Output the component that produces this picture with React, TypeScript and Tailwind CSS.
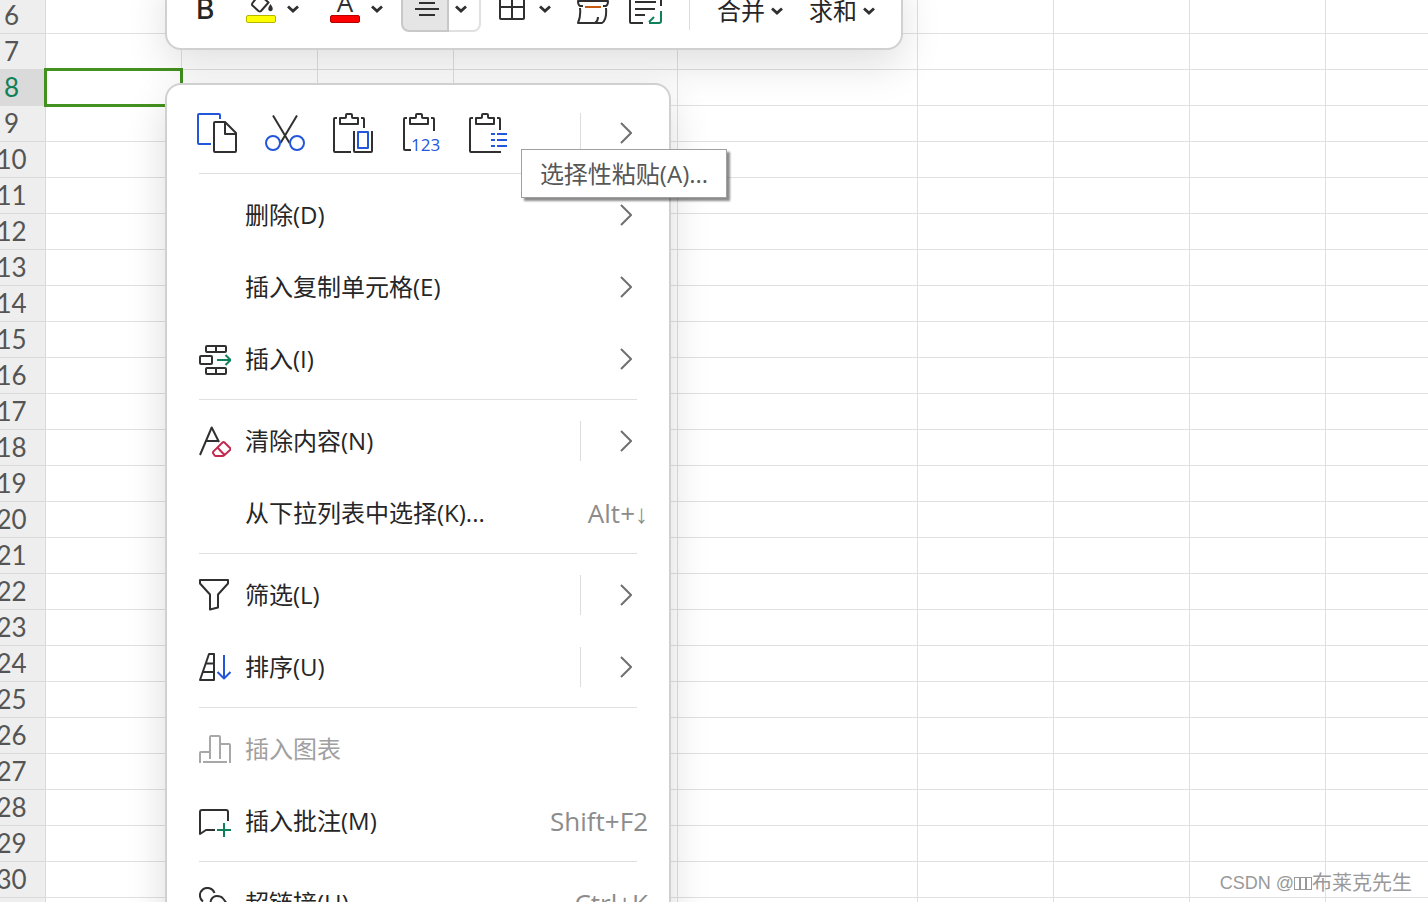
import type { ReactNode } from "react";
import clsx from "clsx";

const ROWS = Array.from({ length: 26 }, (_, i) => i + 6);
const COLUMNS = ["A", "B", "C", "D", "E", "F", "G", "H", "I"];
const ACTIVE_ROW = 8;

const INK = "#303030";
const BLUE = "#2456dc";
const GREEN = "#0f8058";

type MenuEntry = {
  label: string;
  icon?: ReactNode;
  shortcut?: string;
  submenu?: boolean;
  split?: boolean;
  disabled?: boolean;
};

function MenuIcon({ children, stroke = INK }: { children: ReactNode; stroke?: string }) {
  return (
    <svg
      className="size-8"
      viewBox="0 0 32 32"
      fill="none"
      stroke={stroke}
      strokeWidth="2"
      strokeLinejoin="round"
      aria-hidden="true"
    >
      {children}
    </svg>
  );
}

const insertIcon = (
  <MenuIcon>
    <rect x="7" y="3" width="20" height="6" rx="1" />
    <path d="M17 3v6M17 25v6" />
    <rect x="1" y="13" width="12" height="8" rx="1" />
    <rect x="7" y="25" width="20" height="6" rx="1" />
    <path d="M18 17h13M26.500 12l5 5-5 5" stroke={GREEN} />
  </MenuIcon>
);

const clearIcon = (
  <MenuIcon>
    <path d="M1 30L12.700 2.500L20 17M6 16h14" />
    <path
      d="M23.500 17.500q1-1 2 0l5.500 5.500q1 1 0 2L25 30.500q-.5.5-1.500.5H17q-1 0-1.500-.7l-1.200-1.800q-.7-1.200.2-2.100zM18.500 22.500l7 7.500"
      stroke="#c5284f"
    />
  </MenuIcon>
);

const filterIcon = (
  <MenuIcon>
    <path d="M1 1h28v3.500L19 15.500v13l-8 2V15.500L1 4.500z" />
  </MenuIcon>
);

const sortIcon = (
  <MenuIcon>
    <path d="M15 3h-5L1 29h14zM7 12.500h8M4 21h11" />
    <path d="M25 4v24M18.500 21l6.500 6.500 6.500-6.500" stroke={BLUE} />
  </MenuIcon>
);

const chartIcon = (
  <MenuIcon stroke="#a8a8a8">
    <path d="M1 30V20q0-1 1-1h9M11 26V4q0-1 1-1h8q1 0 1 1v22M21 11h9q1 0 1 1v18M4 29h24" />
  </MenuIcon>
);

const commentIcon = (
  <MenuIcon>
    <path d="M29 16V7q0-2-2-2H3Q1 5 1 7v22l6-4h9" />
    <path d="M25 18v14M18 25h14" stroke={GREEN} />
  </MenuIcon>
);

const linkIcon = (
  <MenuIcon>
    <path d="M4 14.500A7.500 7.500 0 1 1 15.500 6M12 13q2-4 6-4 4 0 6 2.500l5 6.500q2 5-2 8.500-5 3-9 0l-5-6q-2-4-1-7.500z" />
  </MenuIcon>
);

const MENU_GROUPS: MenuEntry[][] = [
  [
    { label: "删除(D)", submenu: true },
    { label: "插入复制单元格(E)", submenu: true },
    { label: "插入(I)", icon: insertIcon, submenu: true },
  ],
  [
    { label: "清除内容(N)", icon: clearIcon, submenu: true, split: true },
    { label: "从下拉列表中选择(K)...", shortcut: "Alt+↓" },
  ],
  [
    { label: "筛选(L)", icon: filterIcon, submenu: true, split: true },
    { label: "排序(U)", icon: sortIcon, submenu: true, split: true },
  ],
  [
    { label: "插入图表", icon: chartIcon, disabled: true },
    { label: "插入批注(M)", icon: commentIcon, shortcut: "Shift+F2" },
  ],
  [{ label: "超链接(H)", icon: linkIcon, shortcut: "Ctrl+K" }],
];

export default function App() {
  return (
    <main className="relative h-screen overflow-hidden bg-white font-['Open_Sans','Noto_Sans_CJK_SC',sans-serif] text-[#262626]">
      <Sheet />
      <FloatingToolbar />
      <ContextMenu />
      <Watermark />
    </main>
  );
}

function Sheet() {
  return (
    // first column is scrolled partly out of view
    <div className="-mt-[2px] -ml-[22px]">
      <table className="w-full table-fixed border-separate border-spacing-0">
        <colgroup>
          <col className="w-[68px]" />
          <col className="w-[136px]" />
          <col className="w-[136px]" />
          <col className="w-[136px]" />
          <col className="w-[224px]" />
          <col className="w-[240px]" />
          <col className="w-[136px]" />
          <col className="w-[136px]" />
          <col className="w-[136px]" />
          <col />
        </colgroup>
        <tbody>
          {ROWS.map((row) => (
            <tr key={row} className="h-9">
              <th
                scope="row"
                className={clsx(
                  "border-r border-b border-[#dadada] p-0 font-['Lato',sans-serif] text-[26px] leading-[35px] font-normal",
                  row === ACTIVE_ROW ? "bg-[#dadada] text-[#0f8058]" : "bg-[#eeeeee] text-[#555555]",
                )}
              >
                {row}
              </th>
              {COLUMNS.map((col) => (
                <td key={col} className="relative border-b border-[#e0e0e0] p-0 not-last:border-r">
                  {row === ACTIVE_ROW && col === "A" ? (
                    <span className="absolute -inset-[2px] z-10 border-3 border-[#43911f]" />
                  ) : null}
                </td>
              ))}
            </tr>
          ))}
        </tbody>
      </table>
    </div>
  );
}

function DownCaret() {
  return (
    <svg className="h-3 w-3" viewBox="0 0 12 12" fill="none" stroke={INK} strokeWidth="2.800" aria-hidden="true">
      <path d="M1 3.500l5 4.500 5-4.500" />
    </svg>
  );
}

function FloatingToolbar() {
  return (
    <div
      role="toolbar"
      aria-label="格式"
      className="absolute -top-[31px] left-[165px] z-20 flex h-[81px] items-center rounded-2xl border-2 border-[#d0d0d0] bg-white pr-[26px] pb-px pl-[29px] shadow-[0_16px_40px_rgba(0,0,0,0.12)]"
    >
      <button type="button" className="w-[17px] font-['Inter',sans-serif] text-[28px] leading-[42px] font-medium">
        B
      </button>
      <button type="button" aria-label="填充颜色" className="ml-[33px] flex items-center gap-[11px]">
        <svg className="h-11 w-[30px]" viewBox="0 0 30 44" fill="none" stroke={INK} strokeWidth="2" aria-hidden="true">
          <path d="M12 9L6.500 16q-1 1.500 0 2.500l6 5.500q1.500 1 2.500 0L22.500 15.500 14 8" strokeLinejoin="round" />
          <path d="M24.500 17q3 4 2 6-2 2.500-4 0-1-2 2-6z" fill={INK} stroke="none" />
          <rect x=".5" y="28.500" width="29" height="7" rx="1.500" fill="#ffff00" stroke="#b5b500" strokeWidth="1" />
        </svg>
        <DownCaret />
      </button>
      <button type="button" aria-label="字体颜色" className="ml-[31px] flex items-center gap-[11px]">
        <svg className="h-11 w-[30px]" viewBox="0 0 30 44" fill="none" stroke={INK} strokeWidth="2" aria-hidden="true">
          <text x="15" y="25" textAnchor="middle" fontSize="26" fill={INK} stroke="none">
            A
          </text>
          <rect x=".5" y="28.500" width="29" height="7" rx="1.500" fill="#ff0000" stroke="#b50000" strokeWidth="1" />
        </svg>
        <DownCaret />
      </button>
      <div className="ml-[18px] flex h-[46px] w-20">
        <button
          type="button"
          aria-label="居中"
          className="flex flex-1 items-center justify-center rounded-l-lg border-2 border-[#c8c8c8] bg-[#e5e5e5] pl-1"
        >
          <svg className="h-11 w-6" viewBox="0 0 24 44" stroke={INK} strokeWidth="2" aria-hidden="true">
            <path d="M4 16h16M0 22h24M4 28h16" />
          </svg>
        </button>
        <button
          type="button"
          aria-label="更多对齐方式"
          className="flex w-8 items-center rounded-r-lg border-2 border-l-0 border-[#e0e0e0] pl-[6px]"
        >
          <DownCaret />
        </button>
      </div>
      <button type="button" aria-label="边框" className="ml-[18px] flex items-center gap-[14px]">
        <svg className="h-11 w-[26px]" viewBox="0 0 26 44" fill="none" stroke={INK} strokeWidth="2" aria-hidden="true">
          <rect x="1" y="8" width="24" height="24" rx="1" />
          <path d="M13 8v24M1 20h24" />
        </svg>
        <DownCaret />
      </button>
      <button type="button" aria-label="单元格样式" className="ml-[26px]">
        <svg className="h-11 w-8" viewBox="0 0 32 44" fill="none" stroke={INK} strokeWidth="2" aria-hidden="true">
          <path d="M6 19H3q-2-1-2-5h30q0 4-2 5h-3" strokeLinejoin="round" />
          <path d="M3 21Q4 29 1 36h24q5-3 4-15M21 30q0 4-3 6" strokeLinejoin="round" />
          <path d="M8 20h16" stroke="#c55a11" />
        </svg>
      </button>
      <button type="button" aria-label="自动换行" className="ml-5">
        <svg className="h-11 w-[33px]" viewBox="0 0 33 44" fill="none" stroke={INK} strokeWidth="2" aria-hidden="true">
          <path d="M14 36H2q-1 0-1-1V7h31v12M6 15h21M6 22h20M6 28h10" />
          <path d="M32 24v10q0 2-2 2H20M25 30l-5 5" stroke={GREEN} />
        </svg>
      </button>
      <span className="ml-[27px] h-[42px] w-px self-center bg-[#dcdcdc]" />
      <button type="button" className="ml-[27px] flex items-center gap-[6px] pt-1 text-2xl leading-10 whitespace-nowrap">
        合并
        <DownCaret />
      </button>
      <button type="button" className="ml-[26px] flex items-center gap-[6px] pt-1 text-2xl leading-10 whitespace-nowrap">
        求和
        <DownCaret />
      </button>
    </div>
  );
}

function ClipIcon({ children }: { children: ReactNode }) {
  return (
    <svg
      className="size-10 overflow-visible"
      viewBox="0 0 40 40"
      fill="none"
      stroke={INK}
      strokeWidth="2"
      strokeLinejoin="round"
      aria-hidden="true"
    >
      {children}
    </svg>
  );
}

const CLIP_PATH = "M7 5h5q1 0 1-1V2q0-1 1-1h4q1 0 1 1v2q0 1 1 1h5v6H7z";

const PASTE_TOOLS: { name: string; icon: ReactNode }[] = [
  {
    name: "复制",
    icon: (
      <ClipIcon>
        <path d="M23 6V2q0-1-1-1H2q-1 0-1 1v28q0 1 1 1h12" stroke={BLUE} />
        <path d="M17 10q0-1 1-1h10l11 11v18q0 1-1 1H18q-1 0-1-1zM28 9v12h11" />
      </ClipIcon>
    ),
  },
  {
    name: "剪切",
    icon: (
      <ClipIcon>
        <path d="M8 2.500L24.500 30M32 2.500L15.500 30" />
        <circle cx="8" cy="30" r="7" stroke={BLUE} />
        <circle cx="32" cy="30" r="7" stroke={BLUE} />
      </ClipIcon>
    ),
  },
  {
    name: "粘贴",
    icon: (
      <ClipIcon>
        <path d={CLIP_PATH} />
        <path d="M4 5H2q-1 0-1 1v32q0 1 1 1h16M28 5h2q1 0 1 1v9M21 18v20q0 1 1 1h16q1 0 1-1V18" />
        <rect x="25" y="19" width="10" height="16" stroke={BLUE} />
      </ClipIcon>
    ),
  },
  {
    name: "粘贴为数值",
    icon: (
      <ClipIcon>
        <path d={CLIP_PATH} transform="translate(2 0)" />
        <path d="M6 5H4q-1 0-1 1v30q0 1 1 1h6M30 5h2q1 0 1 1v12" />
        <text x="10" y="38" fontFamily="'Open Sans', sans-serif" fontSize="17" fill={BLUE} stroke="none">
          123
        </text>
      </ClipIcon>
    ),
  },
  {
    name: "仅粘贴格式",
    icon: (
      <ClipIcon>
        <path d={CLIP_PATH} />
        <path d="M4 5H2q-1 0-1 1v32q0 1 1 1h30M28 5h2q1 0 1 1v11" />
        <path d="M22 21h4M28 21h10M22 27h4M28 27h10M22 33h4M28 33h10" stroke={BLUE} />
      </ClipIcon>
    ),
  },
];

function SubmenuArrow({ split = false }: { split?: boolean }) {
  return (
    <span
      className={clsx(
        "flex h-10 w-[68px] shrink-0 items-center justify-end border-l pr-4",
        split ? "border-[#dcdcdc]" : "border-transparent",
      )}
    >
      <svg className="h-6 w-3" viewBox="0 0 12 24" fill="none" stroke="#707070" strokeWidth="2" aria-hidden="true">
        <path d="M1 2l10 10L1 22" />
      </svg>
    </span>
  );
}

function Separator() {
  return <div role="separator" className="mx-8 mt-1 mb-[5px] h-px bg-[#e0e0e0]" />;
}

function MenuItem({ entry }: { entry: MenuEntry }) {
  return (
    <button
      type="button"
      role="menuitem"
      disabled={entry.disabled}
      className="flex h-[72px] w-full items-center pr-[21px] pl-8 text-left disabled:text-[#a0a0a0]"
    >
      <span className="mr-[14px] size-8 shrink-0">{entry.icon}</span>
      <span className="flex-1 text-2xl leading-9 whitespace-nowrap">{entry.label}</span>
      {entry.shortcut ? (
        <span className="font-['Open_Sans','Liberation_Sans',sans-serif] text-[26px] leading-9 whitespace-nowrap text-[#8c8c8c]">
          {entry.shortcut}
        </span>
      ) : null}
      {entry.submenu ? <SubmenuArrow split={entry.split} /> : null}
    </button>
  );
}

function ContextMenu() {
  return (
    <div
      role="menu"
      className="absolute top-[83px] left-[165px] z-30 w-[506px] rounded-2xl border-2 border-[#d0d0d0] bg-white pt-3 pb-4 shadow-[0_16px_40px_rgba(0,0,0,0.14)]"
    >
      <div className="flex h-[72px] items-center pr-[21px] pl-[30px]">
        <div className="flex flex-1 gap-7">
          {PASTE_TOOLS.map((tool) => (
            <button key={tool.name} type="button" aria-label={tool.name}>
              {tool.icon}
            </button>
          ))}
        </div>
        <button type="button" aria-label="选择性粘贴" className="relative">
          <SubmenuArrow split />
          <span
            role="tooltip"
            className="absolute top-[36px] -left-[59px] z-10 w-[206px] border border-[#a0a0a0] bg-white py-[5px] text-center text-2xl leading-[37px] whitespace-nowrap text-[#575757] shadow-[3px_3px_2px_rgba(0,0,0,0.45)]"
          >
            选择性粘贴(A)...
          </span>
        </button>
      </div>
      {MENU_GROUPS.map((group) => (
        <div key={group[0].label} role="group">
          <Separator />
          {group.map((entry) => (
            <MenuItem key={entry.label} entry={entry} />
          ))}
        </div>
      ))}
    </div>
  );
}

function Watermark() {
  return (
    <p className="absolute right-4 bottom-1 flex items-center font-['Liberation_Sans','Noto_Sans_CJK_SC',sans-serif] text-xl leading-[30px] whitespace-pre text-[#999999]">
      <span className="text-lg leading-[30px]">CSDN @</span>
      <span className="flex">
        <span className="h-[13px] w-[6px] border border-[#999999]" />
        <span className="h-[13px] w-[6px] border border-[#999999]" />
        <span className="h-[13px] w-[6px] border border-[#999999]" />
      </span>
      布莱克先生
    </p>
  );
}
